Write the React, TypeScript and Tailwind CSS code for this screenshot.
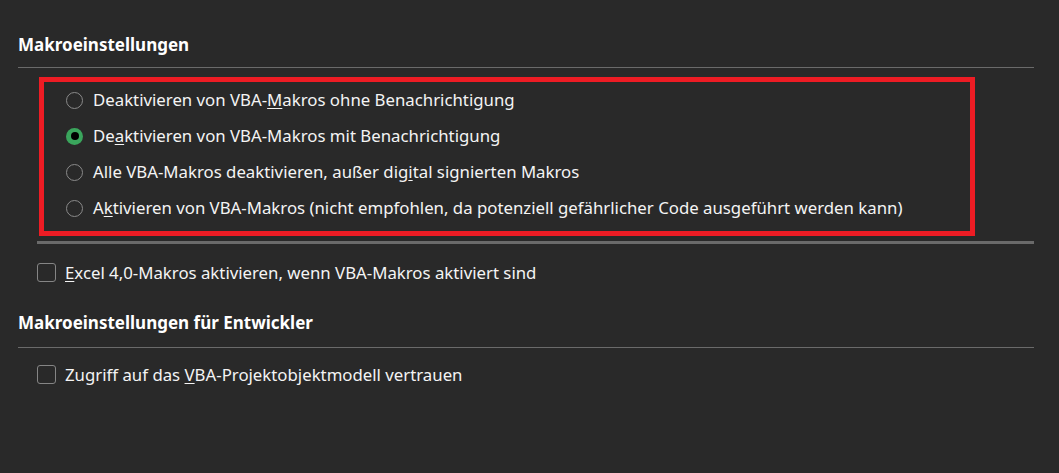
import type { ReactNode } from "react";

type RadioRow = { id: string; checked?: boolean; label: ReactNode };

const radios: RadioRow[] = [
  {
    id: "off-silent",
    label: (
      <>
        Deaktivieren von VBA-<u className="underline-offset-2">M</u>akros ohne Benachrichtigung
      </>
    )
  },
  {
    id: "off-notify",
    checked: true,
    label: (
      <>
        De<u className="underline-offset-2">a</u>ktivieren von VBA-Makros mit Benachrichtigung
      </>
    )
  },
  {
    id: "off-signed",
    label: (
      <>
        Alle VBA-Makros deaktivieren, außer dig<u className="underline-offset-2">i</u>tal signierten Makros
      </>
    )
  },
  {
    id: "on",
    label: (
      <>
        A<u className="underline-offset-2">k</u>tivieren von VBA-Makros (nicht empfohlen, da potenziell gefährlicher Code ausgeführt werden kann)
      </>
    )
  }
];

function Radio({ checked }: { checked?: boolean }) {
  return checked ? (
    <span className="flex h-[17px] w-[17px] shrink-0 items-center justify-center rounded-full bg-[#3aa55c]">
      <span className="h-[8px] w-[8px] rounded-full bg-black" />
    </span>
  ) : (
    <span className="h-[17px] w-[17px] shrink-0 rounded-full border-[1.5px] border-[#8a8a8a]" />
  );
}

function Checkbox() {
  return <span className="h-[19px] w-[19px] shrink-0 rounded-[3px] border-[1.5px] border-[#858585]" />;
}

export default function App() {
  return (
    <div
      className="h-[473px] w-[1059px] overflow-hidden bg-[#292929] text-[16.8px] text-[#f4f4f4]"
      style={{ fontFamily: '"Noto Sans", "Open Sans", sans-serif' }}
    >
      <div className="pl-[18px] pr-[25px] pt-[33px]">
        <h2 className="text-[17px] font-bold leading-[24px] text-white">Makroeinstellungen</h2>
        <div className="mt-[10px] h-px bg-[#6a6a6a]" />

        <div className="ml-[21px] mr-[59px] mt-[9px] border-[5px] border-[#ed1c24] pb-[5px]">
          {radios.map((r) => (
            <div key={r.id} className="flex h-[36px] items-center gap-[10px] pl-[22px]">
              <Radio checked={r.checked} />
              <span className="leading-none">{r.label}</span>
            </div>
          ))}
        </div>
        <div className="ml-[19px] mt-[5px] h-[3px] bg-[#6a6a6a]" />

        <div className="ml-[19px] mt-[16px] flex items-center gap-[9px]">
          <Checkbox />
          <span>
            <u className="underline-offset-2">E</u>xcel 4,0-Makros aktivieren, wenn VBA-Makros aktiviert sind
          </span>
        </div>

        <h2 className="mt-[26px] text-[17px] font-bold leading-[24px] text-white">
          Makroeinstellungen für Entwickler
        </h2>
        <div className="mt-[12px] h-px bg-[#6a6a6a]" />

        <div className="ml-[19px] mt-[14px] flex items-center gap-[9px]">
          <Checkbox />
          <span>
            Zugriff auf das <u className="underline-offset-2">V</u>BA-Projektobjektmodell vertrauen
          </span>
        </div>
      </div>
    </div>
  );
}
